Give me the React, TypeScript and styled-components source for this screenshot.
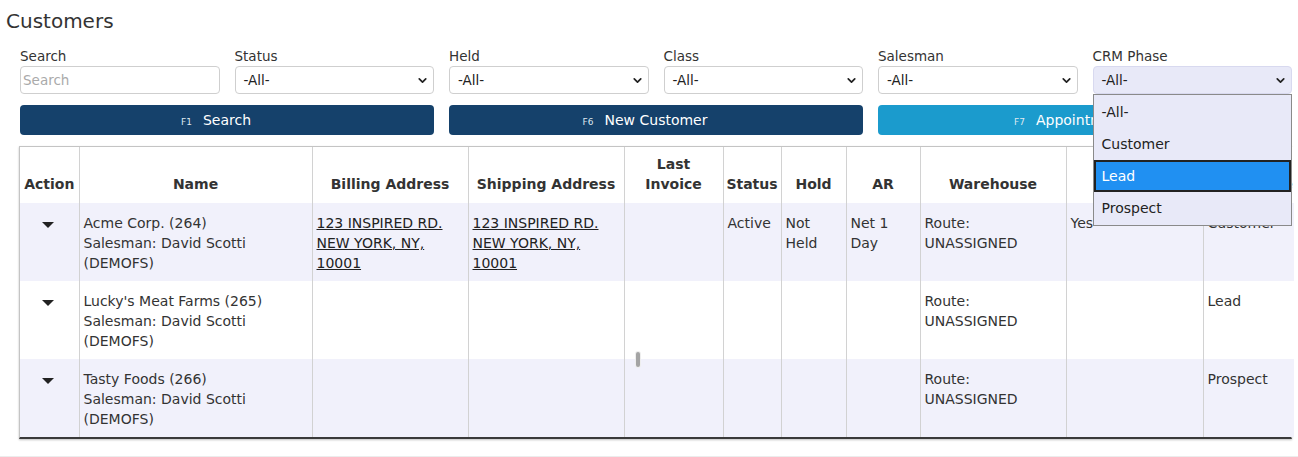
import { ChevronDown } from "lucide-react";
import styled, { createGlobalStyle } from "styled-components";

const GlobalStyle = createGlobalStyle`
  html, body {
    margin: 0;
    padding: 0;
    background: #fff;
  }
  body {
    font-family: "DejaVu Sans", Tahoma, sans-serif;
    font-size: 14px;
    color: #333;
  }
`;

const Page = styled.div`
  position: relative;
  width: 1298px;
  height: 457px;
  overflow: hidden;
`;

const Title = styled.h1`
  margin: 0;
  padding: 9px 0 0 6px;
  height: 36px;
  box-sizing: border-box;
  font-size: 20px;
  font-weight: normal;
  color: #333;
`;

const Content = styled.div`
  padding: 12px 6px 0 20px;
`;

const FilterGrid = styled.div`
  display: grid;
  grid-template-columns: repeat(6, 1fr);
  column-gap: 15px;
  row-gap: 11px;
`;

const Field = styled.div`
  display: flex;
  flex-direction: column;
  position: relative;
`;

const Label = styled.label`
  font-size: 13.5px;
  line-height: 17px;
  height: 18px;
`;

const TextInput = styled.input`
  box-sizing: border-box;
  height: 28px;
  width: 100%;
  border: 1px solid #cfcfcf;
  border-radius: 4px;
  padding: 0 2px;
  font: inherit;
  font-size: 13.5px;
  color: #333;
  &::placeholder {
    color: #aaa;
  }
`;

const SelectBox = styled.div<{ $active?: boolean }>`
  box-sizing: border-box;
  height: 28px;
  display: flex;
  align-items: center;
  justify-content: space-between;
  padding: 0 4px 0 8px;
  border: 1px solid ${(p) => (p.$active ? "#d8d9ef" : "#cfcfcf")};
  border-radius: 4px;
  background: ${(p) => (p.$active ? "#e8e9f8" : "#fff")};
  color: #222;
  font-size: 13.5px;
`;

const Button = styled.button<{ $light?: boolean }>`
  grid-column: span 2;
  height: 30px;
  border: none;
  border-radius: 4px;
  background: ${(p) => (p.$light ? "#1b9bcd" : "#15416b")};
  color: #fff;
  font: inherit;
  font-size: 14px;
  display: flex;
  align-items: center;
  justify-content: center;
  padding: 0;
`;

const ButtonText = styled.span`
  position: relative;
`;

const KeyHint = styled.span`
  position: absolute;
  right: calc(100% + 11px);
  top: 5px;
  font-size: 9px;
  color: #dfe7ef;
`;

const TableWrap = styled.div`
  margin: 11px 0 0 -1px;
  border: 1px solid #c4c4c4;
  border-bottom: 2px solid #3a3a3a;
  box-shadow: 0 1px 2px rgba(0, 0, 0, 0.25);
`;

const Table = styled.table`
  width: 100%;
  table-layout: fixed;
  border-collapse: collapse;
`;

const Th = styled.th`
  height: 56px;
  box-sizing: border-box;
  vertical-align: bottom;
  padding: 0 2px 9px;
  font-weight: bold;
  font-size: 14px;
  line-height: 20px;
  color: #333;
  background: #fff;
  white-space: nowrap;
  border-left: 1px solid #d2d2d2;
  &:first-child {
    border-left: none;
  }
`;

const Tr = styled.tr<{ $alt?: boolean }>`
  background: ${(p) => (p.$alt ? "#f1f1fb" : "#fff")};
`;

const Td = styled.td`
  height: 78px;
  box-sizing: border-box;
  vertical-align: top;
  padding: 10px 6px 8px 4px;
  line-height: 20px;
  color: #333;
  border-left: 1px solid #d2d2d2;
  &:first-child {
    border-left: none;
    text-align: center;
  }
`;

const Caret = styled.span`
  display: inline-block;
  margin-top: 7px;
  width: 0;
  height: 0;
  border-left: 6px solid transparent;
  border-right: 6px solid transparent;
  border-top: 6px solid #222;
`;

const AddressLink = styled.a`
  color: #222;
  text-decoration: underline;
`;

const Dropdown = styled.ul`
  position: absolute;
  top: 100%;
  left: 0;
  right: 0;
  margin: 0;
  padding: 1px 0;
  list-style: none;
  background: #e8e9f8;
  border: 1px solid #8a8a8a;
  z-index: 5;
`;

const Option = styled.li<{ $selected?: boolean }>`
  box-sizing: border-box;
  height: 32px;
  display: flex;
  align-items: center;
  padding-left: ${(p) => (p.$selected ? "6px" : "8px")};
  font-size: 14px;
  color: ${(p) => (p.$selected ? "#fff" : "#222")};
  background: ${(p) => (p.$selected ? "#2090f2" : "transparent")};
  border: ${(p) => (p.$selected ? "2px solid #222" : "none")};
`;

const Cursor = styled.div`
  position: absolute;
  left: 636px;
  top: 352px;
  width: 4px;
  height: 15px;
  border-radius: 2px;
  background: #a4a4a4;
  box-shadow: 0 0 0 1px #eee;
`;

const Footer = styled.div`
  position: absolute;
  left: 0;
  right: 0;
  bottom: 0;
  height: 1px;
  background: #ececec;
`;

const filters = ["Status", "Held", "Class", "Salesman"];

const columns = [
  { title: "Action", width: 59 },
  { title: "Name", width: 233 },
  { title: "Billing Address", width: 156 },
  { title: "Shipping Address", width: 156 },
  { title: "Last Invoice", width: 99 },
  { title: "Status", width: 58 },
  { title: "Hold", width: 65 },
  { title: "AR", width: 74 },
  { title: "Warehouse", width: 146 },
  { title: "Taxable", width: 137 },
  { title: "CRM Phase", width: 91 },
];

interface ICustomer {
  name: string;
  address?: string[];
  status?: string;
  hold?: string;
  ar?: string;
  taxable?: string;
  phase: string;
}

const customers: ICustomer[] = [
  {
    name: "Acme Corp. (264)",
    address: ["123 INSPIRED RD.", "NEW YORK, NY,", "10001"],
    status: "Active",
    hold: "Not Held",
    ar: "Net 1 Day",
    taxable: "Yes",
    phase: "Customer",
  },
  { name: "Lucky's Meat Farms (265)", phase: "Lead" },
  { name: "Tasty Foods (266)", phase: "Prospect" },
];

const phases = ["-All-", "Customer", "Lead", "Prospect"];

function Address({ lines }: { lines?: string[] }) {
  if (!lines) return null;
  return (
    <AddressLink href="#">
      {lines.map((l, i) => (
        <span key={i}>
          {l}
          {i < lines.length - 1 && <br />}
        </span>
      ))}
    </AddressLink>
  );
}

export default function App() {
  return (
    <Page>
      <GlobalStyle />
      <Title>Customers</Title>
      <Content>
        <FilterGrid>
          <Field>
            <Label>Search</Label>
            <TextInput placeholder="Search" />
          </Field>
          {filters.map((f) => (
            <Field key={f}>
              <Label>{f}</Label>
              <SelectBox>
                -All-
                <ChevronDown size={13} strokeWidth={3.2} color="#222" />
              </SelectBox>
            </Field>
          ))}
          <Field>
            <Label>CRM Phase</Label>
            <SelectBox $active>
              -All-
              <ChevronDown size={13} strokeWidth={3.2} color="#222" />
            </SelectBox>
            <Dropdown>
              {phases.map((p) => (
                <Option key={p} $selected={p === "Lead"}>
                  {p}
                </Option>
              ))}
            </Dropdown>
          </Field>
          <Button>
            <ButtonText>
              <KeyHint>F1</KeyHint>Search
            </ButtonText>
          </Button>
          <Button>
            <ButtonText>
              <KeyHint>F6</KeyHint>New Customer
            </ButtonText>
          </Button>
          <Button $light>
            <ButtonText>
              <KeyHint>F7</KeyHint>Appointments
            </ButtonText>
          </Button>
        </FilterGrid>
        <TableWrap>
          <Table>
            <colgroup>
              {columns.map((c) => (
                <col key={c.title} style={{ width: c.width }} />
              ))}
            </colgroup>
            <thead>
              <tr>
                {columns.map((c) => (
                  <Th key={c.title}>
                    {c.title === "Last Invoice" ? (
                      <>
                        Last
                        <br />
                        Invoice
                      </>
                    ) : (
                      c.title
                    )}
                  </Th>
                ))}
              </tr>
            </thead>
            <tbody>
              {customers.map((c, i) => (
                <Tr key={c.name} $alt={i % 2 === 0}>
                  <Td>
                    <Caret />
                  </Td>
                  <Td>
                    {c.name}
                    <br />
                    Salesman: David Scotti
                    <br />
                    (DEMOFS)
                  </Td>
                  <Td>
                    <Address lines={c.address} />
                  </Td>
                  <Td>
                    <Address lines={c.address} />
                  </Td>
                  <Td />
                  <Td>{c.status}</Td>
                  <Td>{c.hold}</Td>
                  <Td>{c.ar}</Td>
                  <Td>
                    Route:
                    <br />
                    UNASSIGNED
                  </Td>
                  <Td>{c.taxable}</Td>
                  <Td>{c.phase}</Td>
                </Tr>
              ))}
            </tbody>
          </Table>
        </TableWrap>
      </Content>
      <Cursor />
      <Footer />
    </Page>
  );
}
